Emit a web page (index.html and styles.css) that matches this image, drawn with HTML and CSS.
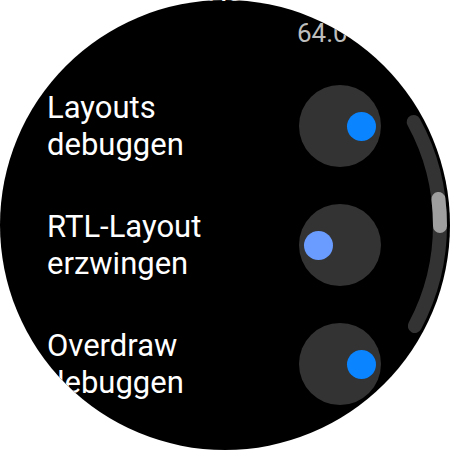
FILE: index.html
```html
<!DOCTYPE html>
<html lang="de">
<head>
<meta charset="utf-8">
<link rel="stylesheet" href="styles.css">
</head>
<body>
<div class="watch">
  <div class="list">
    <div class="item item-top">
      <div class="title">Profil-GPU-Rendern</div>
      <div class="summary">64.0</div>
    </div>
    <div class="row">
      <div class="label">Layouts<br>debuggen</div>
      <div class="toggle on"><span class="dot"></span></div>
    </div>
    <div class="row">
      <div class="label">RTL-Layout<br>erzwingen</div>
      <div class="toggle off"><span class="dot"></span></div>
    </div>
    <div class="row">
      <div class="label">Overdraw<br>debuggen</div>
      <div class="toggle on"><span class="dot"></span></div>
    </div>
  </div>
  <svg class="scrollbar" width="450" height="450" viewBox="0 0 450 450">
    <path d="M413.7 122 A215 215 0 0 1 414.8 326" fill="none" stroke="#333333" stroke-width="14" stroke-linecap="round"/>
    <path d="M438.4 199 A215 215 0 0 1 440 226" fill="none" stroke="#9e9e9e" stroke-width="14" stroke-linecap="round"/>
  </svg>
</div>
</body>
</html>
```

FILE: styles.css
```css
html, body {
  margin: 0;
  padding: 0;
  background: #ffffff;
}

.watch {
  position: relative;
  width: 450px;
  height: 450px;
  border-radius: 50%;
  background: #000000;
  overflow: hidden;
  font-family: Roboto, "Noto Sans", sans-serif;
  color: #ffffff;
}

.list {
  margin-top: -28px;
  padding: 0 69px 0 47px;
}

.item-top {
  padding-bottom: 18px;
}

.title {
  font-size: 31px;
  line-height: 37px;
  white-space: nowrap;
  padding-left: 10px;
}

.summary {
  margin-top: 8px;
  padding-left: 250px;
  font-size: 26px;
  line-height: 32px;
  color: #bdbdbd;
}

.row {
  display: flex;
  align-items: center;
  padding: 18px 0 19px;
}

.label {
  flex: 1;
  font-size: 31px;
  line-height: 37px;
}

.toggle {
  width: 82px;
  height: 82px;
  border-radius: 50%;
  background: #333333;
  display: flex;
  align-items: center;
  padding: 0 5px;
  box-sizing: border-box;
}

.toggle.on {
  justify-content: flex-end;
}

.toggle.off {
  justify-content: flex-start;
}

.dot {
  width: 29px;
  height: 29px;
  border-radius: 50%;
}

.toggle.on .dot {
  background: #0a84ff;
}

.toggle.off .dot {
  background: #6a9cff;
}

.scrollbar {
  position: absolute;
  left: 0;
  top: 0;
}
```
